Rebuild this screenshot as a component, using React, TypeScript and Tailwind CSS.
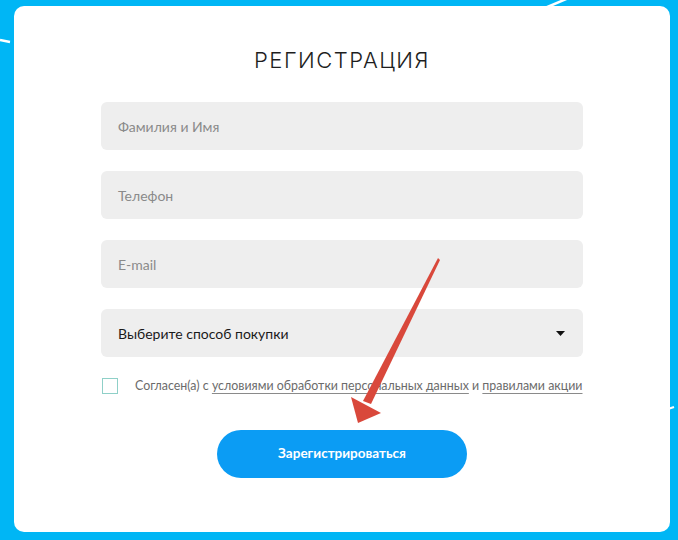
import React from 'react';

const fields = ['Фамилия и Имя', 'Телефон', 'E-mail'];

export default function App() {
  return (
    <div className="relative w-[678px] h-[540px] overflow-hidden bg-[#00b6f5] pt-[6px] pl-[14px] pr-[8px] pb-[8px]">
      {/* белые штрихи фона */}
      <svg className="absolute inset-0 pointer-events-none" width="678" height="540">
        <line x1="545" y1="8" x2="578" y2="-6" stroke="#fff" strokeWidth="2.5" />
        <line x1="0" y1="40" x2="10" y2="42" stroke="#fff" strokeWidth="2.5" />
        <line x1="668" y1="409" x2="674" y2="407" stroke="#fff" strokeWidth="2" />
      </svg>

      <div
        className="relative flex flex-col items-center w-full h-full bg-white rounded-[10px] pt-[40px]"
        style={{ fontFamily: 'Lato, "Open Sans", sans-serif' }}
      >
        <h1
          className="text-[22px] leading-[28px] font-light tracking-[1.5px] text-[#1e1e1e]"
          style={{ fontFamily: 'Inter, "Noto Sans", sans-serif' }}
        >
          РЕГИСТРАЦИЯ
        </h1>

        <div className="flex flex-col gap-[21px] w-[482px] mt-[28px]">
          {fields.map((f) => (
            <div
              key={f}
              className="flex items-center h-[48px] rounded-[6px] bg-[#eeeeee] px-[17px] text-[14px] text-[#8a8a8a]"
            >
              {f}
            </div>
          ))}
          <div className="flex items-center justify-between h-[48px] rounded-[6px] bg-[#eeeeee] pl-[17px] pr-[18px] text-[14px] text-[#1a1a1a]">
            <span>Выберите способ покупки</span>
            <svg width="9" height="5" viewBox="0 0 9 5">
              <path d="M0 0H9L4.5 5Z" fill="#111" />
            </svg>
          </div>
        </div>

        <div className="flex items-center w-[482px] mt-[20px] pl-[1px]">
          <div className="shrink-0 w-[16px] h-[16px] border border-[#8fd0c8] bg-white" />
          <p className="ml-[17px] text-[12.4px] text-[#6b6b6b] whitespace-nowrap">
            Согласен(а) с{' '}
            <span className="underline underline-offset-[3px] decoration-[#8a8a8a]">
              условиями обработки персональных данных
            </span>{' '}
            и{' '}
            <span className="underline underline-offset-[3px] decoration-[#8a8a8a]">правилами акции</span>
          </p>
        </div>

        <button
          type="button"
          className="mt-[34px] w-[250px] h-[48px] rounded-full bg-[#0b9cf4] text-white text-[13.5px] font-bold"
        >
          Зарегистрироваться
        </button>
      </div>

      {/* красная стрелка поверх формы */}
      <svg className="absolute inset-0 pointer-events-none" width="678" height="540">
        <path d="M438 258 L440 260 L371 404 L363 401 Z" fill="#d9483b" />
        <path d="M358 423 L351 397 L381 413 Z" fill="#d9483b" />
      </svg>
    </div>
  );
}
